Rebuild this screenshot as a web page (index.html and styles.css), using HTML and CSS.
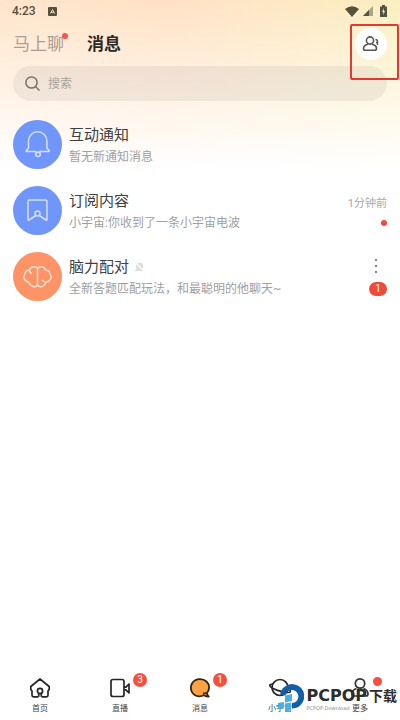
FILE: index.html
```html
<!DOCTYPE html>
<html lang="zh-CN">
<head>
<meta charset="utf-8">
<meta name="viewport" content="width=device-width, initial-scale=1">
<title>消息</title>
<link rel="stylesheet" href="styles.css">
</head>
<body>
<div class="status">
  <span class="clock">4:23</span>
  <svg class="app-mark" width="9" height="9" viewBox="0 0 9 9"><rect width="9" height="9" rx="1" fill="#57503f"/><path d="M2.5 6.5l2-4 2 4M3 5.3h3" stroke="#f5dfc2" fill="none"/></svg>
  <span class="status-icons">
    <svg width="14" height="11" viewBox="0 0 14 11"><path d="M0 3Q7-2.5 14 3L7 11z" fill="#555340"/></svg>
    <svg width="10" height="10" viewBox="0 0 10 10"><path d="M10 0v10H0z" fill="#aaa48a"/><path d="M6 4v6H0z" fill="#555340"/></svg>
    <svg width="7" height="12" viewBox="0 0 7 12"><path d="M2 0h3v1.500h2V12H0V1.500h2z" fill="#555340"/><path d="M4 3L2 7h1.200v3L5 6H3.800z" fill="#f6e8c0"/></svg>
  </span>
</div>

<header class="header">
  <nav class="tabs">
    <a class="tab" href="#chat">马上聊<i class="dot tab-dot"></i></a>
    <a class="tab tab-active" href="#messages">消息</a>
  </nav>
  <button class="contacts" type="button" aria-label="联系人">
    <svg width="18" height="18" viewBox="0 0 18 18" fill="none" stroke="#555" stroke-width="1.600" stroke-linejoin="round"><circle cx="8" cy="5.500" r="3.600"/><path d="M6 9.300C3 9.800 1.500 11.500 1.500 13.500q0 1.800 1.800 1.800h9.400q1.800 0 1.800-1.800c0-2-1.500-3.700-4.500-4.200"/><path d="M13.500 4.500q2 0 2 2v3.500M14 7.500h1.500" stroke-width="1.400"/></svg>
  </button>
</header>

<label class="search">
  <svg width="15" height="15" viewBox="0 0 15 15" fill="none" stroke="#77716b" stroke-width="1.500"><circle cx="6.500" cy="6.500" r="5.600"/><path d="M10.500 10.500l4 4"/></svg>
  <input type="search" placeholder="搜索" aria-label="搜索">
</label>

<main class="list">
  <article class="row">
    <svg class="avatar" viewBox="0 0 49 49"><circle cx="24.500" cy="24.500" r="24.500" fill="#7196fb"/><g fill="none" stroke="#d3e0ff" stroke-width="1.500" stroke-linejoin="round" stroke-linecap="round"><path d="M22 31.500h-8.500q-.7 0-.3-.8L15.500 28v-7a9.200 9.200 0 0 1 18.400 0v7l2.300 2.700q.4.800-.3.800H27.500"/><circle cx="25" cy="34.200" r="2.300"/><path d="M21.500 31.500q2 0 2.500 1.500M28 31.500q-1.500 0-2 1"/></g></svg>
    <div class="body"><h2>互动通知</h2><p>暂无新通知消息</p></div>
  </article>
  <article class="row">
    <svg class="avatar" viewBox="0 0 49 49"><circle cx="24.500" cy="24.500" r="24.500" fill="#7196fb"/><g fill="none" stroke="#d3e0ff" stroke-width="1.500" stroke-linejoin="round" stroke-linecap="round"><path d="M22.800 29.500L16 34q-1 .5-1-.8V15.500q0-1.500 1.500-1.500h16q1.500 0 1.500 1.500v17.700q0 1.300-1 .8l-6.800-4.500"/><circle cx="24.500" cy="27.500" r="2.500"/></g></svg>
    <div class="body"><h2>订阅内容</h2><p>小宇宙:你收到了一条小宇宙电波</p></div>
    <div class="meta"><time>1分钟前</time><i class="dot"></i></div>
  </article>
  <article class="row">
    <svg class="avatar" viewBox="0 0 49 49"><circle cx="24.500" cy="24.500" r="24.500" fill="#fd9366"/><g fill="none" stroke="#ffe0cf" stroke-width="1.500" stroke-linecap="round" stroke-linejoin="round"><path d="M24.500 17v16M24.500 16.500C22.500 14 18 14 16.500 18 11.500 18 12.500 22 11.500 23 10 25 11 29 15.500 30 18.500 36 23 35.500 24.500 33M24.500 16.500C26.500 14 31 14 32.500 18 37.500 18 36.500 22 37.500 23 39 25 38 29 33.500 30 30.500 36 26 35.500 24.500 33M16.500 18q-.3 2.500 2 3.200M33.500 30q-3 .5-4-1.800"/></g></svg>
    <div class="body">
      <h2>脑力配对<svg class="muted" width="11" height="11" viewBox="0 0 11 11"><path d="M2 9V5a3.500 3.500 0 0 1 7 0v4h1.500v1H.5V9z" fill="#dedede"/><path d="M.5.500L10.500 10.500" stroke="#fff" stroke-width="1.200"/></svg></h2>
      <p>全新答题匹配玩法，和最聪明的他聊天~</p>
    </div>
    <div class="meta">
      <button class="more" type="button" aria-label="更多操作"><svg width="4" height="16" viewBox="0 0 4 16" fill="#8c8c8c"><circle cx="2" cy="2" r="1.300"/><circle cx="2" cy="8" r="1.300"/><circle cx="2" cy="14" r="1.300"/></svg></button>
      <span class="pill">1</span>
    </div>
  </article>
</main>

<footer class="bottom">
  <nav class="bar">
    <a href="#home"><span class="icon"><svg width="22" height="22" viewBox="0 0 22 22" fill="none" stroke="#252525" stroke-width="1.700" stroke-linejoin="round"><path d="M9.500 19.800H4.500q-1.500 0-1.500-1.500V14L1.800 12.500V9.500L11 2l9.200 7.500v3L19 14v4.300q0 1.500-1.500 1.500h-5"/><circle cx="11" cy="14" r="2.600"/><path d="M9.700 16v3.800M12.300 16v3.800"/></svg></span>首页</a>
    <a href="#live"><span class="icon"><svg width="22" height="22" viewBox="0 0 22 22" fill="none" stroke="#252525" stroke-width="1.700" stroke-linejoin="round"><rect x="2" y="2.500" width="13" height="17" rx="2"/><path d="M15 10.200h2l3-3.200v9l-3-3.200h-2"/></svg><b class="badge">3</b></span>直播</a>
    <a href="#messages"><span class="icon"><svg width="22" height="22" viewBox="0 0 22 22" fill="#fda343" stroke="#38230f" stroke-width="1.800" stroke-linejoin="round"><path d="M17.800 16.200C21 13 20.800 7.500 17.500 4.500 13.500.8 6 1.300 3 6.500 0 12 3.300 19 10 19.300c2 .1 3.500-.3 4.800-1 1.500 1 3 1.400 5 1.200-1-.8-1.800-1.800-2-3.300z"/><path d="M14 16.500q1.500 0 3-.5" fill="none"/></svg><b class="badge">1</b></span>消息</a>
    <a href="#planet"><span class="icon"><svg width="22" height="22" viewBox="0 0 22 22" fill="none" stroke="#252525" stroke-width="1.700"><circle cx="11" cy="10.500" r="8"/><path d="M4 7C0 7-.5 9 4 11.500S21 17 21.500 14.500 19 11 18 10.500"/></svg></span>小宇宙</a>
    <a href="#more"><span class="icon"><svg width="22" height="22" viewBox="0 0 22 22" fill="none" stroke="#333" stroke-width="1.700"><circle cx="11" cy="6.500" r="4.700"/><path d="M7.500 11.500C4.500 12.500 3 14.500 3 17q0 2 2 2h12q2 0 2-2c0-2.500-1.500-4.500-4.500-5.500"/></svg><i class="dot bar-dot"></i></span>更多</a>
  </nav>
  <div class="watermark">
    <svg width="27" height="32" viewBox="0 0 27 32"><path d="M3 11.500A12.200 12.200 0 1 1 15 25.500V20A6.500 6.500 0 1 0 8.500 12.500z" fill="#125fa5"/><path d="M8 12.500l7-1.500v7l-7 1.500zM1 20l6-1v6l-6 1zM8 20.500l6-1v7.500L8 29z" fill="#43b0ec"/></svg>
    <div class="brand"><strong>PCPOP</strong><small>PCPOP Download</small></div>
    <b class="download">下载</b>
  </div>
</footer>
<div class="highlight"></div>
</body>
</html>
```
FILE: styles.css
```css
* { box-sizing: border-box; }
body {
  margin: 0;
  min-height: 100vh;
  display: flex;
  flex-direction: column;
  position: relative;
  background:
    linear-gradient(to bottom, transparent 0, #fff 170px),
    linear-gradient(to right, #ffe5cb 0, #ffe2c5 45%, #fbefc0 100%);
  color: #404040;
  font-family: Roboto, "Noto Sans CJK SC", sans-serif;
}
a { color: inherit; text-decoration: none; }
button { border: 0; padding: 0; background: none; }
svg { display: block; flex: none; }
.status {
  display: flex;
  align-items: center;
  height: 22px;
  padding: 0 13px 0 12px;
  color: #57503f;
}
.clock { font-size: 12px; font-weight: 500; }
.app-mark { margin-left: 12px; }
.status-icons { display: flex; align-items: center; gap: 4px; margin-left: auto; }
.status-icons svg:last-child { margin-left: 3px; }
.header {
  display: flex;
  align-items: center;
  justify-content: space-between;
  height: 44px;
  padding: 0 13px;
}
.tabs { display: flex; gap: 23px; font-size: 17px; line-height: 24px; }
.tab { position: relative; color: #aa9e92; }
.tab-active { color: #2b2926; font-weight: 700; }
.dot { display: block; width: 6px; height: 6px; border-radius: 50%; background: #f04b3c; }
.tab-dot { position: absolute; top: 1px; right: -4px; background: #fb5350; }
.contacts {
  display: grid;
  place-items: center;
  width: 32px;
  height: 32px;
  border-radius: 50%;
  background: #fff;
}
.search {
  display: flex;
  align-items: center;
  gap: 8px;
  height: 35px;
  margin: 0 13px;
  padding: 0 12px;
  border-radius: 18px;
  background: rgba(120, 110, 110, .1);
}
.search input {
  flex: 1;
  min-width: 0;
  padding: 0;
  border: 0;
  outline: 0;
  background: none;
  font: 12px/18px Roboto, "Noto Sans CJK SC", sans-serif;
}
.search input::placeholder { color: #aaa39d; }
.list { display: flex; flex-direction: column; gap: 17px; flex: 1; padding: 19px 13px; }
.row { display: flex; align-items: center; gap: 7px; }
.avatar { width: 49px; height: 49px; }
.body { flex: 1; min-width: 0; }
.body h2 {
  display: flex;
  align-items: center;
  gap: 5px;
  margin: 0;
  font-size: 15px;
  font-weight: 400;
  line-height: 24px;
}
.body p { margin: 0; color: #a0a0a0; font-size: 12px; line-height: 20px; white-space: nowrap; }
.meta { display: flex; flex-direction: column; align-items: flex-end; gap: 8px; }
.meta time { color: #a8a8a8; font-size: 11px; line-height: 16px; }
.more { padding-right: 9px; }
.pill {
  width: 18px;
  border-radius: 7px;
  background: #ee4b3b;
  color: #fff;
  font-size: 10px;
  line-height: 14px;
  text-align: center;
}
.bottom { position: relative; background: #fff; }
.bar { display: grid; grid-template-columns: repeat(5, 1fr); }
.bar a {
  display: flex;
  flex-direction: column;
  align-items: center;
  gap: 4px;
  height: 43px;
  color: #444;
  font-size: 8px;
  line-height: 12px;
}
.icon { position: relative; }
.badge {
  position: absolute;
  top: -4px;
  left: 24px;
  width: 14px;
  border-radius: 50%;
  background: #f54f40;
  color: #fff;
  font-size: 10px;
  font-weight: 400;
  line-height: 14px;
  text-align: center;
}
.bar-dot { position: absolute; top: 0; left: 24px; width: 9px; height: 9px; background: #f54f40; }
.watermark {
  position: absolute;
  right: 3px;
  bottom: 5px;
  display: flex;
  align-items: center;
  gap: 2px;
  color: #2d2d2d;
}
.brand { display: flex; flex-direction: column; font-family: "DejaVu Sans", sans-serif; }
.brand strong { font-size: 16px; line-height: 18px; }
.brand small { font-size: 5px; line-height: 6px; color: #888; }
.download { padding-bottom: 6px; font-size: 14px; line-height: 18px; }
.highlight {
  position: absolute;
  top: 24px;
  right: 1px;
  width: 49px;
  height: 56px;
  border: 2px solid #e23a30;
  border-radius: 2px;
  pointer-events: none;
}
```
